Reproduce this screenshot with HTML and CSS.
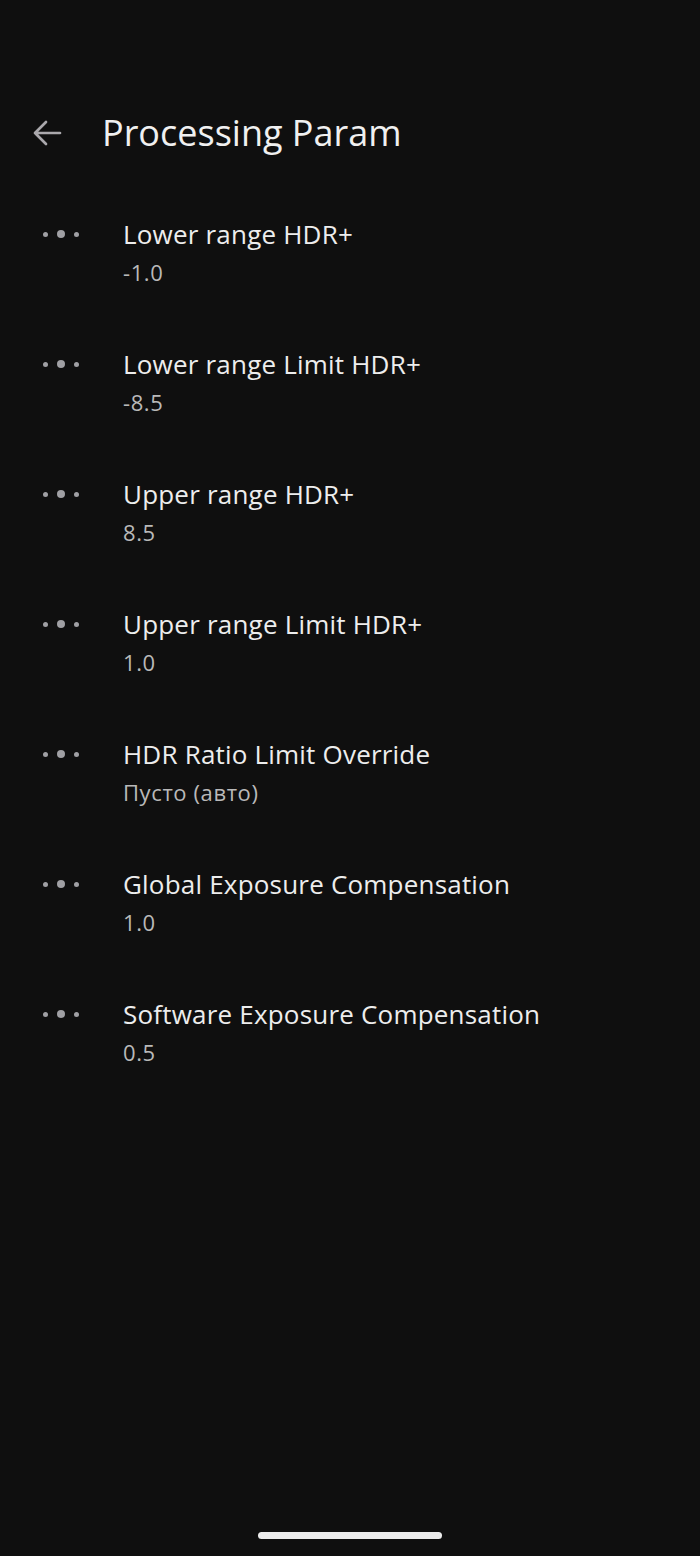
FILE: index.html
```
<!DOCTYPE html>
<html lang="en">
<head>
  <meta charset="UTF-8">
  <meta name="viewport" content="width=device-width, initial-scale=1.0">
  <title>Processing Param</title>
  <link rel="stylesheet" href="styles.css">
</head>
<body>

<div class="screen">
  <header class="top-bar">
    <button class="back-btn" aria-label="Back">
      <svg width="30" height="28" viewBox="0 0 30 28">
        <path d="M28 14H3M14 3L3 14l11 11" fill="none" stroke="#aaa8ac" stroke-width="2.7" stroke-linecap="round" stroke-linejoin="round"/>
      </svg>
    </button>
    <h1 class="title">Processing Param</h1>
  </header>

  <ul class="settings">
    <li class="setting">
      <span class="dots"><i></i><i class="big"></i><i></i></span>
      <div class="text">
        <div class="name">Lower range HDR+</div>
        <div class="value">-1.0</div>
      </div>
    </li>
    <li class="setting">
      <span class="dots"><i></i><i class="big"></i><i></i></span>
      <div class="text">
        <div class="name">Lower range Limit HDR+</div>
        <div class="value">-8.5</div>
      </div>
    </li>
    <li class="setting">
      <span class="dots"><i></i><i class="big"></i><i></i></span>
      <div class="text">
        <div class="name">Upper range HDR+</div>
        <div class="value">8.5</div>
      </div>
    </li>
    <li class="setting">
      <span class="dots"><i></i><i class="big"></i><i></i></span>
      <div class="text">
        <div class="name">Upper range Limit HDR+</div>
        <div class="value">1.0</div>
      </div>
    </li>
    <li class="setting">
      <span class="dots"><i></i><i class="big"></i><i></i></span>
      <div class="text">
        <div class="name">HDR Ratio Limit Override</div>
        <div class="value">Пусто (авто)</div>
      </div>
    </li>
    <li class="setting">
      <span class="dots"><i></i><i class="big"></i><i></i></span>
      <div class="text">
        <div class="name">Global Exposure Compensation</div>
        <div class="value">1.0</div>
      </div>
    </li>
    <li class="setting">
      <span class="dots"><i></i><i class="big"></i><i></i></span>
      <div class="text">
        <div class="name">Software Exposure Compensation</div>
        <div class="value">0.5</div>
      </div>
    </li>
  </ul>

  <div class="home-bar"></div>
</div>

</body>
</html>
```

FILE: styles.css
```
html, body {
    margin: 0;
    padding: 0;
    background-color: #0f0f0f;
}
body {
    font-family: 'Open Sans', Roboto, 'Noto Sans', sans-serif;
    color: #ececec;
}
.screen {
    height: 1556px;
    display: flex;
    flex-direction: column;
}
.top-bar {
    display: flex;
    align-items: center;
    padding: 111px 0 0 32px;
    height: 44px;
}
.back-btn {
    background: none;
    border: none;
    padding: 0;
    width: 70px;
    height: 44px;
    display: flex;
    align-items: center;
    cursor: pointer;
}
.title {
    margin: 0;
    font-size: 36px;
    font-weight: 400;
    line-height: 44px;
    color: #f0f0f0;
}
.settings {
    list-style: none;
    margin: 32px 0 0;
    padding: 0;
}
.setting {
    display: flex;
    align-items: flex-start;
    padding: 27px 0;
}
.dots {
    flex: 0 0 123px;
    padding-left: 43px;
    height: 40px;
    display: flex;
    align-items: center;
    gap: 9px;
    box-sizing: border-box;
}
.dots i {
    display: block;
    width: 5px;
    height: 5px;
    border-radius: 50%;
    background-color: #a0a0a4;
}
.dots i.big {
    width: 8px;
    height: 8px;
}
.text {
    display: flex;
    flex-direction: column;
}
.name {
    font-size: 26px;
    line-height: 40px;
    letter-spacing: 0.2px;
    color: #ededed;
}
.value {
    font-size: 22px;
    line-height: 36px;
    letter-spacing: 0.6px;
    color: #b9b9b9;
}
.home-bar {
    margin: auto auto 17px;
    width: 184px;
    height: 7px;
    border-radius: 4px;
    background-color: #ececec;
}
```
